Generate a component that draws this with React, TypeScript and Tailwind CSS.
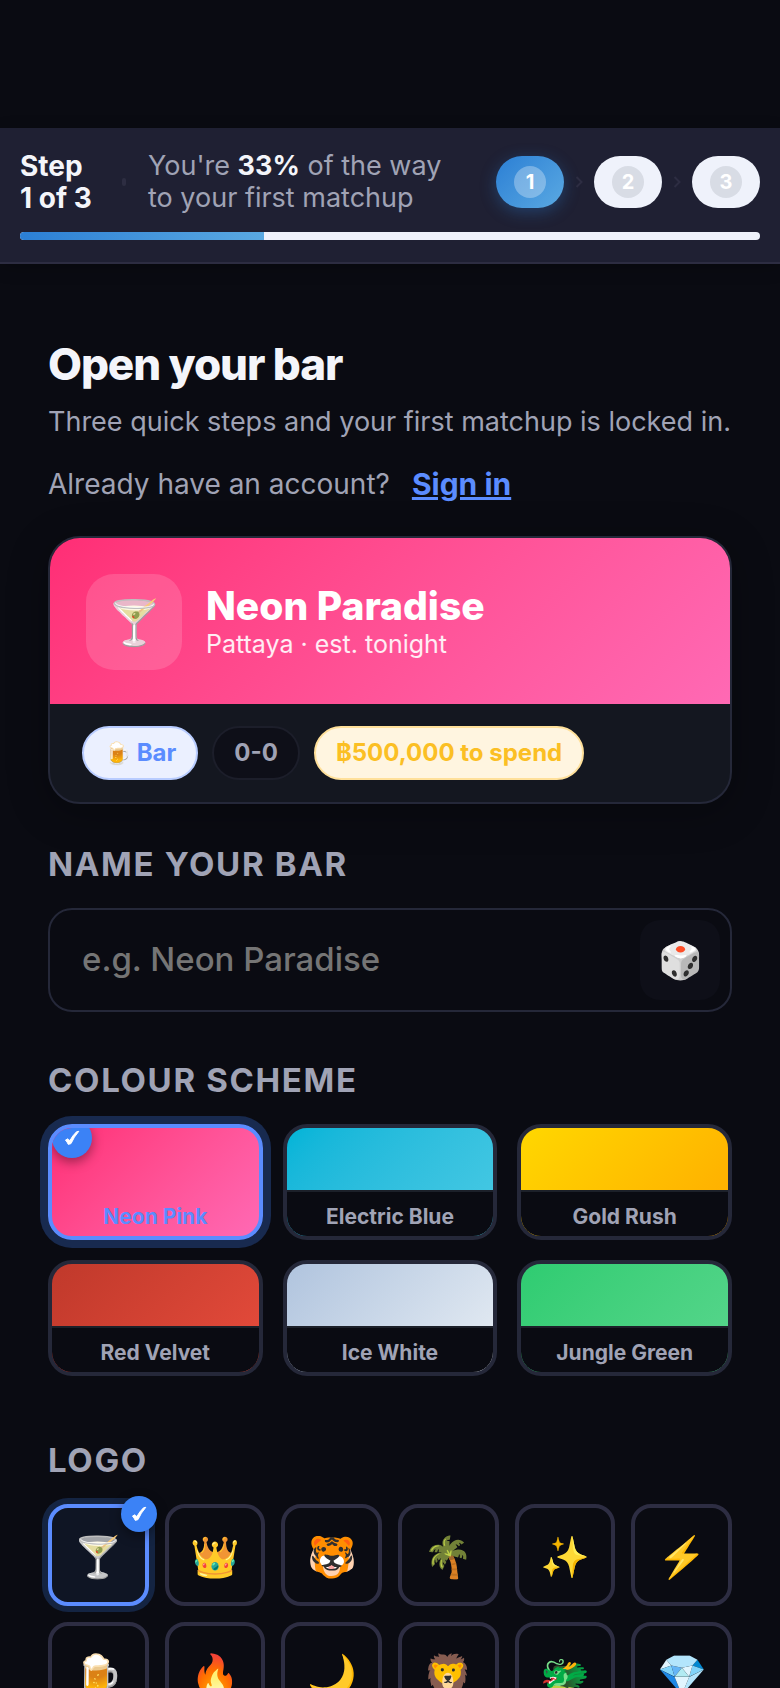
import { useState, type ReactNode } from "react";
import clsx from "clsx";

const STEPS = [1, 2, 3];

const THEMES = [
  { id: "neon", name: "Neon Pink", swatch: "bg-linear-135 from-[#ff2d75] to-[#ff69b4]" },
  { id: "blue", name: "Electric Blue", swatch: "bg-linear-135 from-[#00b4d8] to-[#48cae4]" },
  { id: "gold", name: "Gold Rush", swatch: "bg-linear-135 from-[#ffd700] to-[#ffaa00]" },
  { id: "red", name: "Red Velvet", swatch: "bg-linear-135 from-[#c0392b] to-[#e74c3c]" },
  { id: "ice", name: "Ice White", swatch: "bg-linear-135 from-[#b0c4de] to-[#e8eef4]" },
  { id: "green", name: "Jungle Green", swatch: "bg-linear-135 from-[#2ecc71] to-[#58d68d]" },
];

const LOGOS = [
  { icon: "🍸", label: "Cocktail" },
  { icon: "👑", label: "Crown" },
  { icon: "🐯", label: "Tiger" },
  { icon: "🌴", label: "Palm" },
  { icon: "✨", label: "Sparkles" },
  { icon: "⚡", label: "Lightning" },
  { icon: "🍺", label: "Beer" },
  { icon: "🔥", label: "Fire" },
  { icon: "🌙", label: "Moon" },
  { icon: "🦁", label: "Lion" },
  { icon: "🐲", label: "Dragon" },
  { icon: "💎", label: "Diamond" },
];

const RANDOM_NAMES = ["Neon Paradise", "Tiger Lounge", "Moonlight Bar"];

function StepHeader({ current }: { current: number }) {
  const percent = Math.round((current / STEPS.length) * 100);

  return (
    <header className="border-b-2 border-[#2d2d42] bg-[#1f2033] px-5 py-[22px] shadow-[0_4px_16px_rgba(0,0,0,0.2)]">
      <div className="flex items-center text-[27px] leading-8">
        <div className="w-20 text-[28px] font-bold whitespace-nowrap text-[#f4f5fa]">
          Step
          <br />
          {current} of {STEPS.length}
        </div>
        <div className="mx-[22px] h-2 w-1 rounded-full bg-[#2d2d42]" />
        <p className="text-[#a0a3b5]">
          You're <strong className="font-bold text-[#f4f5fa]">{percent}%</strong> of the way
          <br />
          to your first matchup
        </p>
        <ol className="ml-auto flex items-center">
          {STEPS.map((step) => (
            <li key={step} className="flex items-center">
              {step > 1 && (
                <svg
                  className="w-[30px]"
                  height="12"
                  viewBox="0 0 30 12"
                  fill="none"
                  stroke="#2d2d42"
                  strokeWidth="2"
                >
                  <path d="M12.500 1 17.500 6l-5 5" />
                </svg>
              )}
              <div
                className={clsx(
                  "flex h-[52px] w-[68px] items-center justify-center rounded-full",
                  step === current
                    ? "bg-linear-135 from-[#2b7fd4] to-[#5aa9e2] shadow-[0_4px_16px_rgba(43,127,212,0.35)]"
                    : "bg-[#eff2fb]"
                )}
              >
                <span
                  className={clsx(
                    "flex size-8 items-center justify-center rounded-full text-xl font-bold text-white",
                    step === current ? "bg-white/30" : "bg-[#d8dce5]"
                  )}
                >
                  {step}
                </span>
              </div>
            </li>
          ))}
        </ol>
      </div>
      <div className="mt-[18px] h-2 overflow-hidden rounded-sm bg-[#eff2fb]">
        <div
          className="h-full bg-linear-to-r from-[#2b7fd4] to-[#5aa9e2]"
          style={{ width: `${percent}%` }}
        />
      </div>
    </header>
  );
}

function CheckMark() {
  return (
    <svg
      className="size-4"
      viewBox="0 0 16 16"
      fill="currentColor"
      stroke="currentColor"
      strokeLinejoin="round"
    >
      <path d="M1.500 10 4 8.800Q5 9.600 5.600 11 8.500 5.600 12.500 1.800L14.800 1.300Q10 6.800 7 13.600L4.300 14.400Q3.200 12 1.500 10Z" />
    </svg>
  );
}

function SectionTitle({ children }: { children: ReactNode }) {
  return (
    <h2 className="text-[33px] leading-10 font-bold tracking-wider text-[#a0a3b5] uppercase">
      {children}
    </h2>
  );
}

function BarPreview({ name, logo, swatch }: { name: string; logo: string; swatch: string }) {
  return (
    <section className="mt-8 overflow-hidden rounded-[32px] border-2 border-[#252839] bg-[#141720] shadow-[0_8px_40px_rgba(0,0,0,0.3)]">
      <div className={clsx("flex items-center gap-6 px-9 pt-9 pb-[34px]", swatch)}>
        <div className="flex size-24 items-center justify-center rounded-[28px] bg-white/15 text-[44px]">
          {logo}
        </div>
        <div className="text-white">
          <div className="text-[39px] leading-[44px] font-extrabold">{name}</div>
          <div className="text-[25px] leading-8 text-white/90">Pattaya · est. tonight</div>
        </div>
      </div>
      <div className="flex gap-3.5 px-8 py-[22px] text-2xl leading-[50px] font-bold">
        <span className="rounded-full border-2 border-[#b8ccff] bg-[#ebf0ff] px-5 text-[#5b8cff]">
          <span className="text-[22px]">🍺</span> Bar
        </span>
        <span className="rounded-full border-2 border-[#1c1e2a] bg-[#0e0f18] px-5 text-[#a0a3b5]">
          0-0
        </span>
        <span className="rounded-full border-2 border-[#ffe09a] bg-[#fff5e0] px-5 text-[#fbbf24]">
          ฿500,000 to spend
        </span>
      </div>
    </section>
  );
}

export default function App() {
  const [name, setName] = useState("");
  const [themeId, setThemeId] = useState("neon");
  const [logo, setLogo] = useState("🍸");
  const theme = THEMES.find((t) => t.id === themeId) ?? THEMES[0];

  const rollName = () => {
    setName(RANDOM_NAMES[Math.floor(Math.random() * RANDOM_NAMES.length)]);
  };

  return (
    <div className="h-screen overflow-y-auto bg-[#0a0b12] pt-32 font-['Inter',sans-serif] [scrollbar-width:none]">
      <StepHeader current={1} />

      <main className="px-12 pt-[74px] pb-12">
        <h1 className="text-[44px] leading-[52px] font-extrabold tracking-tight text-[#f4f5fa]">
          Open your bar
        </h1>
        <p className="mt-3.5 text-[27px] leading-9 text-[#a0a3b5]">
          Three quick steps and your first matchup is locked in.
        </p>
        <p className="mt-6 flex gap-[22px] text-[28px] leading-10 text-[#a0a3b5]">
          Already have an account?
          <a href="#sign-in" className="text-[30px] font-bold text-[#5b8cff] underline">
            Sign in
          </a>
        </p>

        <BarPreview name={name || "Neon Paradise"} logo={logo} swatch={theme.swatch} />

        {/* --- Name --- */}
        <div className="mt-10">
          <SectionTitle>
            <label htmlFor="bar-name">Name your bar</label>
          </SectionTitle>
          <div className="mt-6 flex h-[104px] items-center rounded-3xl border-2 border-[#252839] pr-2.5 pl-8">
            <input
              id="bar-name"
              value={name}
              onChange={(e) => setName(e.target.value)}
              placeholder="e.g. Neon Paradise"
              className="min-w-0 flex-1 text-[33px] font-medium text-[#f4f5fa] outline-none placeholder:text-[#757575]"
            />
            <button
              type="button"
              aria-label="Random name"
              onClick={rollName}
              className="size-20 rounded-[20px] bg-[#0e0f18] text-4xl"
            >
              🎲
            </button>
          </div>
        </div>

        {/* --- Colour scheme --- */}
        <div className="mt-12">
          <SectionTitle>Colour scheme</SectionTitle>
          <div className="mt-6 grid grid-cols-3 gap-5">
            {THEMES.map((t) => {
              const selected = t.id === themeId;
              return (
                <button
                  key={t.id}
                  type="button"
                  aria-pressed={selected}
                  onClick={() => setThemeId(t.id)}
                  className={clsx(
                    "relative flex h-[116px] flex-col overflow-hidden rounded-3xl border-4 text-[21px] font-bold",
                    t.swatch,
                    selected
                      ? "border-[#5b8cff] text-[#5b8cff] shadow-[0_0_0_8px_#182a4f]"
                      : "border-[#252839] text-[#a0a3b5]"
                  )}
                >
                  {selected && (
                    <span className="absolute -top-2.5 left-0 flex size-10 items-center justify-center rounded-full bg-[#3b82f6] text-white shadow-[0_4px_12px_rgba(0,0,0,0.4)]">
                      <CheckMark />
                    </span>
                  )}
                  <span
                    className={clsx(
                      "mt-auto h-[46px] w-full border-t-2 leading-[50px]",
                      selected ? "border-transparent" : "border-[#1c2029] bg-[#0a0b12]"
                    )}
                  >
                    {t.name}
                  </span>
                </button>
              );
            })}
          </div>
        </div>

        {/* --- Logo --- */}
        <div className="mt-16">
          <SectionTitle>Logo</SectionTitle>
          <div className="mt-6 grid grid-cols-6 gap-4">
            {LOGOS.map((item) => {
              const selected = item.icon === logo;
              return (
                <button
                  key={item.icon}
                  type="button"
                  aria-label={item.label}
                  aria-pressed={selected}
                  onClick={() => setLogo(item.icon)}
                  className={clsx(
                    "relative flex h-[102px] items-center justify-center rounded-[20px] border-4 pt-1 text-[40px]",
                    selected
                      ? "border-[#5b8cff] bg-[#0f1524] shadow-[0_0_0_6px_#142442]"
                      : "border-[#2d2d42]"
                  )}
                >
                  {item.icon}
                  {selected && (
                    <span className="absolute -top-3 -right-3 flex size-9 items-center justify-center rounded-full bg-[#3b82f6] text-white shadow-[0_4px_12px_rgba(0,0,0,0.4)]">
                      <CheckMark />
                    </span>
                  )}
                </button>
              );
            })}
          </div>
        </div>
      </main>
    </div>
  );
}
